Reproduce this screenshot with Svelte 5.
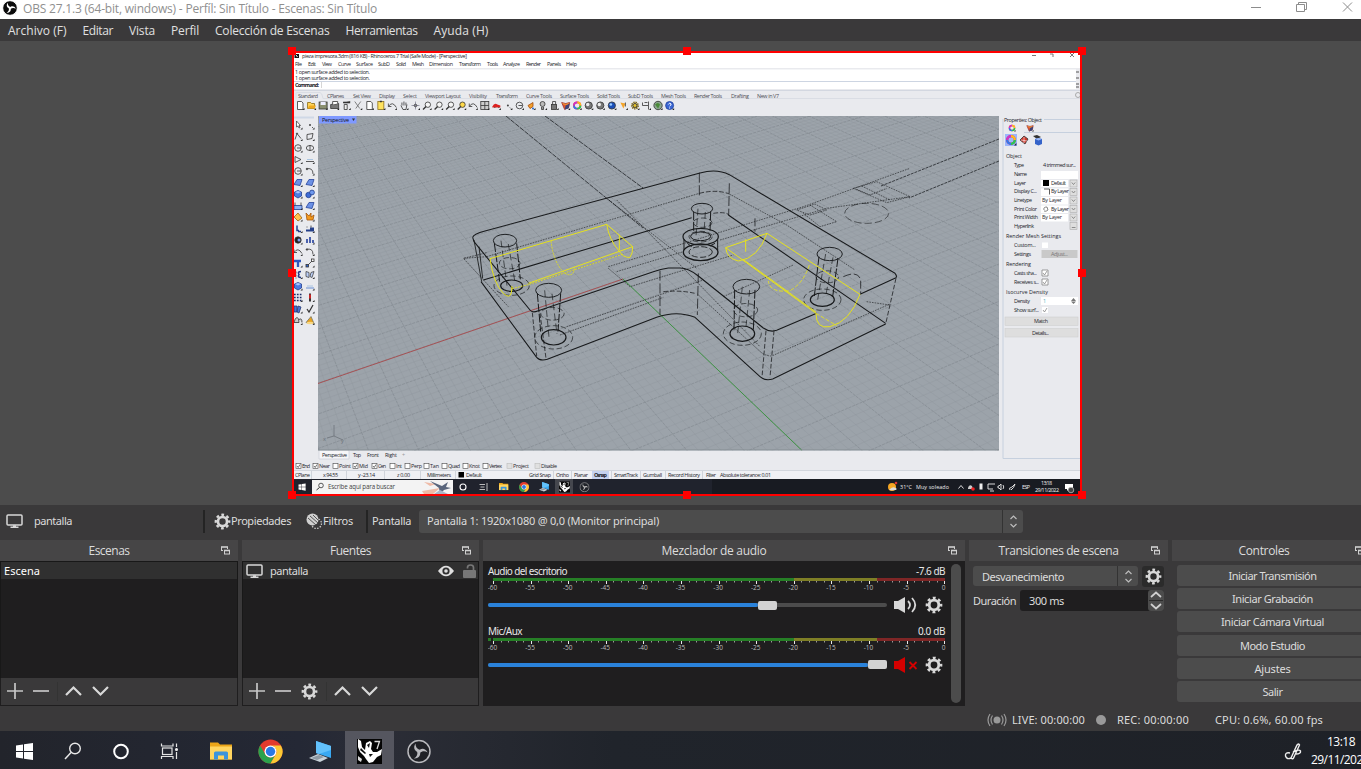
<script>
  // Adjusts letter spacing so that a label takes its design width.
  function fit(node, width) {
    if (!width) return;
    const natural = node.getBoundingClientRect().width;
    const n = node.textContent.length;
    const ls = (width - natural) / n;
    node.style.letterSpacing = ls.toFixed(3) + 'px';
  }

  const menus = [['Archivo (F)', 58.5], ['Editar', 30.5], ['Vista', 26], ['Perfil', 28], ['Colección de Escenas', 114.5], ['Herramientas', 72], ['Ayuda (H)', 55]];
  const controls = [['Iniciar Transmisión', 88], ['Iniciar Grabación', 81], ['Iniciar Cámara Virtual', 103], ['Modo Estudio', 65], ['Ajustes', 36], ['Salir', 20]];
  const channels = [
    { name: 'Audio del escritorio', w: 79, db: '-7.6 dB', dw: 29, pos: 270, muted: false },
    { name: 'Mic/Aux', w: 34, db: '0.0 dB', dw: 27, pos: 380, muted: true }
  ];
  const ticks = Array.from({ length: 61 }, (_, i) => ({ x: 5.5 + i * 7.52, big: i % 5 === 0, v: i - 60 }));

  // Construction plane, projected to two vanishing points.
  const O = [623, 279], V1 = [3286, -629], V2 = [124, -198];
  const A = 0.0024, B = 0.0082;
  function proj(a, b) {
    const d = 1 + a + b;
    return ((O[0] + a * V1[0] + b * V2[0]) / d).toFixed(1) + ' ' + ((O[1] + a * V1[1] + b * V2[1]) / d).toFixed(1);
  }
  let fine = '', major = '';
  for (let n = -60; n <= 100; n++) {
    const s = 'M' + proj(n * A, -0.42) + 'L' + proj(n * A, 0.9);
    if (n % 5 === 0) major += s; else fine += s;
  }
  for (let m = -46; m <= 95; m++) {
    const s = 'M' + proj(-0.16, m * B) + 'L' + proj(0.3, m * B);
    if (m % 5 === 0) major += s; else fine += s;
  }

  // [text, x, baseline, width]
  const rhinoMenu = [['File', 295, 7], ['Edit', 308, 8], ['View', 322, 10], ['Curve', 338, 13], ['Surface', 356, 17], ['SubD', 378, 12], ['Solid', 396, 10], ['Mesh', 412, 12], ['Dimension', 429, 24], ['Transform', 459, 22], ['Tools', 487, 11], ['Analyze', 503, 17], ['Render', 526, 15], ['Panels', 547, 14], ['Help', 566, 11]];
  const tabs = [['Standard', 298, 20], ['CPlanes', 327, 17], ['Set View', 353, 18], ['Display', 379, 16], ['Select', 403, 14], ['Viewport Layout', 425, 36], ['Visibility', 469, 18], ['Transform', 496, 22], ['Curve Tools', 526, 26], ['Surface Tools', 560, 29], ['Solid Tools', 597, 23], ['SubD Tools', 628, 25], ['Mesh Tools', 661, 25], ['Render Tools', 694, 28], ['Drafting', 731, 18], ['New in V7', 757, 22]];
  const props = [['Type', 1014, 167, 10], ['Name', 1014, 176, 13], ['Layer', 1014, 185, 12], ['Display C...', 1014, 193, 23], ['Linetype', 1014, 202, 18], ['Print Color', 1014, 210.5, 23], ['Print Width', 1014, 219, 24], ['Hyperlink', 1014, 228, 20], ['Custom...', 1014, 247, 22], ['Settings', 1014, 256, 17], ['Casts sha...', 1014, 275, 23], ['Receives s...', 1014, 284, 25], ['Density', 1014, 303, 16], ['Show surf...', 1014, 312, 25]];
  const heads = [['Properties: Object', 1004, 121.5, 38], ['Object', 1006, 158, 16], ['Render Mesh Settings', 1006, 238, 55], ['Rendering', 1006, 266, 25], ['Isocurve Density', 1006, 294, 42]];
  const snaps = [['End', 296, 8, 1], ['Near', 313, 11, 1], ['Point', 333, 12, 0], ['Mid', 353, 9, 1], ['Cen', 372, 8, 1], ['Int', 390, 6, 0], ['Perp', 405, 11, 0], ['Tan', 424, 9, 0], ['Quad', 442, 12, 0], ['Knot', 463, 11, 0], ['Vertex', 483, 13, 0], ['Project', 507, 16, 2], ['Disable', 535, 16, 2]];
  const status = [['CPlane', 295, 15], ['x 94.55', 323, 15], ['y -23.14', 358, 17], ['z 0.00', 397, 13], ['Millimeters', 427, 24], ['Default', 466, 16], ['Grid Snap', 529, 22], ['Ortho', 556, 13], ['Planar', 574, 14], ['SmartTrack', 614, 24], ['Gumball', 643, 19], ['Record History', 668, 32], ['Filter', 706, 10], ['Absolute tolerance: 0.01', 720, 51]];

  // Toolbar glyph kinds in reading order.
  const tools = ['new', 'open', 'save', 'print', 'prop', 'cut', 'new', 'paste', 'undo', 'hand', 'move', 'zoom', 'zoom', 'zoomx', 'zoomy', 'rot', 'grid', 'car', 'dot', 'circ', 'layer', 'bulb', 'lock', 'shade', 'wheel', 'ball', 'ball', 'blue', 'spot', 'gear', 'dim', 'earth', 'help'];
  const left = ['ptr', 'dot', 'poly', 'rectp', 'circ', 'ell', 'tri', 'line', 'circ2', 'curve', 'surf', 'surf2', 'box', 'balls', 'cyl', 'surf', 'puz', 'expl', 'trim', 'join', 'bool', 'pts', 'arc', 'arc2', 'T', 'pts2', 'arr', 'sheet', 'box', 'split', 'dots', 'lever', 'books', 'check', 'bell', 'cone'];

  const wells = [
    { top: [165, 272, 35, 19], tl: [133, 280, 149, 395], tr: [200, 280, 211, 388], base: [185, 407, 33, 17] },
    { top: [296, 421, 39, 21], tl: [262, 430, 272, 545], tr: [332, 430, 324, 545], base: [311, 562, 37, 23] },
    { top: [756, 176, 32, 16], tl: [731, 185, 731, 245], tr: [782, 185, 780, 245], base: [752, 260, 53, 25] },
    { top: [889, 410, 40, 22], tl: [854, 420, 852, 540], tr: [915, 420, 910, 540], base: [877, 551, 37, 23] },
    { top: [1139, 312, 38, 20], tl: [1107, 320, 1093, 438], tr: [1164, 325, 1148, 440], base: [1117, 449, 36, 20] }
  ];
</script>

{#snippet gear(size, color)}
  <svg width={size} height={size} viewBox="0 0 18 18" fill="none" stroke={color}>
    <circle cx="9" cy="9" r="4.8" stroke-width="2.8" />
    <circle cx="9" cy="9" r="7.1" stroke-width="2.5" stroke-dasharray="2.9 2.676" stroke-dashoffset="1.45" />
  </svg>
{/snippet}

{#snippet monitor()}
  <svg width="17" height="14" viewBox="0 0 17 14" fill="none" stroke="#d8d8d8">
    <rect x="1" y="1" width="15" height="10" rx="1" stroke-width="1.5" /><path d="M4.5 13.2h8M7 12h3" stroke-width="1.4" />
  </svg>
{/snippet}

{#snippet chev(up)}
  <svg width="17" height="12" viewBox="0 0 17 12" fill="none" stroke="#d8d8d8" stroke-width="2.2"><path d={up ? 'M1 10L8.500 2.500L16 10' : 'M1 2L8.500 9.500L16 2'} /></svg>
{/snippet}

{#snippet sign(plus)}
  <svg width="16" height="16" viewBox="0 0 16 16" stroke="#c6c6c6" stroke-width="1.7"><path d={plus ? 'M0 8H16M8 0V16' : 'M0 8H16'} /></svg>
{/snippet}

{#snippet popout()}
  <svg class="pop" width="9" height="9" viewBox="0 0 9 9" fill="none" stroke="#d0d0d0">
    <path d="M.5 5V1M6.500 1V3M.5 4.500H2" /><path d="M0 1H7" stroke-width="1.600" /><rect x="3.500" y="4.500" width="5" height="3.500" /><path d="M3 4.500H9" stroke-width="1.600" />
  </svg>
{/snippet}

{#snippet dockTitle(label, w)}
  <header><span use:fit={w}>{label}</span>{@render popout()}</header>
{/snippet}

{#snippet obs(size, ring, bg)}
  <svg width={size} height={size} viewBox="0 0 24 24">
    <circle cx="12" cy="12" r="11" fill={bg} stroke={ring} stroke-width="1.5" />
    <g fill={ring}>{#each [0, 120, 240] as r}<path transform="rotate({r} 12 12)" d="M12.500 13C8 12.500 5.500 8.500 8.500 4C8.500 7.500 10 9.500 13 10.500Z" />{/each}</g>
  </svg>
{/snippet}

{#snippet chrome(cx, cy, r)}
  <g transform="translate({cx} {cy}) scale({r / 12})">
    <circle r="12" fill="#e33b2e" />
    <path d="M-10.400 -6A12 12 0 0 0 0 12L5.200 3A6 6 0 0 1 -5.200 3Z" fill="#2ba24c" />
    <path d="M10.400 -6A12 12 0 0 1 0 12L5.200 3A6 6 0 0 0 0 -6Z" fill="#fcc934" />
    <circle r="6" fill="#fff" /><circle r="4.700" fill="#2b78e4" />
  </g>
{/snippet}

{#snippet folder(x, y, s)}
  <g transform="translate({x} {y}) scale({s})">
    <path d="M0 1H8L10 3H22V18H0Z" fill="#eba518" /><path d="M0 5H22V18H0Z" fill="#ffd560" />
    <path d="M4 18V11.500Q4 10 5.500 10H16.500Q18 10 18 11.500V18H14V14H8V18Z" fill="#3c94dc" />
  </g>
{/snippet}

{#snippet laptop(x, y, s)}
  <g transform="translate({x} {y}) scale({s})">
    <path d="M7 0L22 5V17L7 12Z" fill="#39a9f3" /><path d="M7 0L22 5V9L10 13L7 12Z" fill="#62c1fb" />
    <path d="M0 17L9 13L19 17L11 21Z" fill="#c9d2d9" /><path d="M2 17L10 14L15 16L8 19Z" fill="#8e9aa4" />
  </g>
{/snippet}

{#snippet rhino(x, y, s)}
  <g transform="translate({x} {y}) scale({s})">
    <rect width="25" height="25" fill="#050505" />
    <path d="M1 0L4 2L5 8L8 11L9 4L13 2L15 4L14 10L16 13L20 13L25 10L24 16L20 18L16 23L12 24L9 20L7 17L3 13L1 8Z" fill="#fff" />
    <path d="M4 9L9 14L8 15L3 11ZM12 15L16 15L13 18ZM10 6L13 4L12 9Z" fill="#111" /><path d="M1 17L5 20L4 23L1 21Z" fill="#ddd" />
    <path d="M17.500 2.500H22.500L20 10" fill="none" stroke="#ddd" stroke-width="1.300" />
  </g>
{/snippet}

{#snippet windows(x, y, s)}
  <path transform="translate({x} {y}) scale({s})" d="M0 2.500L7 1.500V8H0ZM8 1.300L17 0V8H8ZM0 9H7V15.500L0 14.500ZM8 9H17V17L8 15.700Z" fill="#fff" />
{/snippet}

{#snippet icon(k, x, y)}
  <g transform="translate({x} {y})" fill="none" stroke="#333" stroke-width=".8">
    {#if k === 'new'}<path d="M-2.500-4H1.500L3-2.500V4H-2.500Z" fill="#fff" />
    {:else if k === 'open'}<path d="M-4-3H-1L0-2H3V3H-4Z" fill="#ffd45a" stroke="#8a6a10" /><path d="M-4 3L-2 0H4.500L3 3Z" fill="#f0a91e" stroke="none" />
    {:else if k === 'save'}<rect x="-4" y="-3.500" width="8" height="7" fill="#8a8f70" /><rect x="-2.500" y="-3.500" width="5" height="3" fill="#eef" stroke="none" />
    {:else if k === 'print'}<path d="M-4-1L4-2V3H-4Z" fill="#777" /><path d="M-2-1V-4H3V-2" fill="#fff" />
    {:else if k === 'prop'}<path d="M-3-3H3M0-3L4-4M1-1V4H-2V-1Z" fill="#eee" /><path d="M-3-3H4" stroke-width="1.600" />
    {:else if k === 'cut'}<path d="M-3-4L2 3M3-4L-2 3" stroke="#666" />
    {:else if k === 'paste'}<rect x="-3" y="-4" width="6" height="8" fill="#ffe25e" stroke="#8b701c" /><path d="M-1-4H1" stroke-width="1.500" />
    {:else if k === 'undo' || k === 'rot' || k === 'arc'}<path d="M-4 1Q0-5 4 2M-4 1V-2M-4 1H-1" />
    {:else if k === 'hand'}<path d="M-2 0V-3M0 0V-4M2 0V-3M-3 0L-1 4H2L3-1" />
    {:else if k === 'move'}<path d="M-4 0H4M0-4V4" stroke="#889" /><circle r="1.300" />
    {:else if k === 'zoom' || k === 'zoomx'}<circle cx=".8" cy="-.8" r="2.700" fill="#f6f6f6" /><path d="M-1 1L-4 4" stroke-width="1.300" />
    {:else if k === 'zoomy'}<circle cx=".8" cy="-.8" r="2.700" fill="#ffd94a" /><path d="M-1 1L-4 4" stroke-width="1.300" />
    {:else if k === 'grid'}<rect x="-4" y="-4" width="8" height="8" fill="#ccc" /><path d="M0-4V4M-4 0H4" />
    {:else if k === 'car'}<path d="M-4 1Q-2-3 1-1L4 0V2H-4Z" fill="#dc2222" stroke="none" /><path d="M-2 2H-1M2 2H3" />
    {:else if k === 'dot'}<circle r="1" fill="#444" stroke="none" /><path d="M2 2L3 3" />
    {:else if k === 'circ' || k === 'circ2'}<circle r="3.300" /><path d="M-1 0H3" />
    {:else if k === 'ell'}<ellipse rx="3.700" ry="2.500" /><path d="M0-3V3" />
    {:else if k === 'layer'}<path d="M-3 0L2-3V1L-1 3Z" fill="#f4a02c" stroke="#a04a10" /><circle cx="2" cy="3" r="1" fill="#26c" stroke="none" />
    {:else if k === 'bulb'}<circle cy="-1.500" r="2.500" fill="#bbb" /><path d="M-1 1.500V4H1V1.500" fill="#999" />
    {:else if k === 'lock'}<rect x="-2.500" y="-1" width="5" height="5" fill="#777" /><path d="M-1.500-1V-4H1.500V-1" />
    {:else if k === 'shade'}<path d="M-4-3L0-2L4-3L3 2L-1 4Z" fill="#e4572e" stroke="#933" /><path d="M0 0L4-2L3 3L-1 4Z" fill="#3c4378" stroke="none" /><path d="M-3-2L0-1L3-2" stroke="#f7b53a" />
    {:else if k === 'wheel'}<circle r="3.200" stroke="#e33" stroke-width="1.800" /><path d="M-3.200 0A3.200 3.200 0 0 0 0 3.200" stroke="#37e" stroke-width="1.800" /><path d="M0 3.200A3.200 3.200 0 0 0 3.200 0" stroke="#2c5" stroke-width="1.800" /><path d="M3.200 0A3.200 3.200 0 0 0 0-3.200" stroke="#fb2" stroke-width="1.800" /><path d="M-3.200 0A3.200 3.200 0 0 1 0-3.200" stroke="#c3c" stroke-width="1.800" />
    {:else if k === 'ball'}<circle r="3.600" fill="#777" /><circle cx="-1" cy="-1" r="1.700" fill="#eee" stroke="none" />
    {:else if k === 'blue'}<circle r="3.600" fill="#1b4fb8" /><circle cx="-1" cy="-1" r="1.300" fill="#9cf" stroke="none" />
    {:else if k === 'spot'}<path d="M-3-3L2-2L0 3Z" fill="#f5a52a" stroke="none" /><path d="M2-3V1" />
    {:else if k === 'gear'}<circle r="2.800" stroke="#77600c" stroke-width="2.400" stroke-dasharray="1.200 .7" /><circle r="2" fill="#e5c22b" />
    {:else if k === 'dim'}<path d="M-4-3V0H2V4M2-4V0M-2-3H1" />
    {:else if k === 'earth'}<circle r="4.200" fill="#8aa58e" /><path d="M-3-1Q0-4 2-1L0 3Z" fill="#4a8a3a" stroke="none" />
    {:else if k === 'help'}<circle r="4" fill="#3a66d4" stroke="#1f4099" /><path d="M-1.300-1Q0-3.500 1.500-1.500Q1.500 0 0 .7M0 2V3" stroke="#fff" stroke-width="1" />
    {:else if k === 'ptr'}<path d="M-1.500-4V2L0 1L1 3L2 2.500L1 .5H2.500Z" fill="#fff" stroke-width=".7" />
    {:else if k === 'poly'}<path d="M-3 3L-1-3L3 2" /><circle cx="-1" cy="-3" r=".6" />
    {:else if k === 'rectp'}<path d="M-3-2L3-3L2 2L-3 3Z" />
    {:else if k === 'tri'}<path d="M-3-3V3L3 0Z" />
    {:else if k === 'line' || k === 'split'}<path d="M-4 2H4" stroke={k === 'split' ? '#47c' : '#333'} /><path d="M-3 0H3" stroke="#9bd" />
    {:else if k === 'curve' || k === 'arc2'}<path d="M-4-2Q3-4 3 3" /><circle cx="-3" cy="-2" r=".8" />
    {:else if k === 'surf' || k === 'surf2'}<path d="M-4 2L-1-3L4-3L2 3Z" fill="#6c91e6" stroke="#26439a" />
    {:else if k === 'box'}<path d="M-3.500-2L0-3.500L3.500-2V2L0 4L-3.500 2Z" fill="#4e7be0" stroke="#23408f" /><path d="M-3-2L0-.5L3-2L0-3Z" fill="#a8c4ff" stroke="none" />
    {:else if k === 'balls'}<circle cx="-1.500" cy="1" r="2.700" fill="#3f6cd6" stroke="#23408f" /><circle cx="2" cy="-1.500" r="2.400" fill="#6f99ee" stroke="#23408f" />
    {:else if k === 'cyl'}<path d="M-4 0H4V4H-4Z" fill="#8fb1f0" stroke="#23408f" /><path d="M-3-3V0M3-3V0" />
    {:else if k === 'puz'}<path d="M-4 0L0-4L4 1L0 4Z" fill="#ffc44a" stroke="#9a6010" />
    {:else if k === 'expl'}<path d="M-4-4L-1-1L1-4L1 0L4-2L3 3H-3Z" fill="#f2991d" stroke="#a3560d" />
    {:else if k === 'trim'}<path d="M0 3H3M-1-3V2H1" stroke="#25408a" stroke-width="1.500" />
    {:else if k === 'join'}<path d="M-4 2H4M0 0H4" stroke="#25408a" stroke-width="1.800" /><path d="M-3-1V-2M1-3V-1" />
    {:else if k === 'bool'}<circle r="3.200" fill="#222" /><circle r="1.500" cx="1" fill="#7fa0ee" stroke="none" />
    {:else if k === 'pts'}<path d="M-3 3V-1M0 3V-3M3 3V0" stroke="#223f9c" stroke-width="1.600" />
    {:else if k === 'T'}<path d="M-4-2H3M0-2V4" stroke="#2e57bd" stroke-width="2.300" />
    {:else if k === 'pts2'}<path d="M-3 3L3-3" /><rect x="-4" y="1.500" width="2.500" height="2.500" fill="#36c" /><rect x="1.500" y="-4" width="2.500" height="2.500" fill="#fff" />
    {:else if k === 'arr'}<path d="M3-3Q-1-3 1 0Q-1 3 3 3" stroke="#213a86" stroke-width="1.500" /><path d="M-2-3V4" stroke-dasharray="2 1" />
    {:else if k === 'sheet'}<path d="M-4-3L-1-2V3L-4 2ZM1-2L4-3L2 3L0 2Z" fill="#bcd0fa" stroke="#444" />
    {:else if k === 'dots'}<path d="M-4-3H4M-4 0H4M-4 3H4" stroke="#1d2d66" stroke-width="1.700" stroke-dasharray="1.700 1.200" />
    {:else if k === 'lever'}<path d="M0-4V4" stroke="#222" stroke-width="1.800" /><path d="M0-3V1" stroke="#d22" stroke-width="1.800" />
    {:else if k === 'books'}<path d="M-4-3H-1V3H-4ZM0-3L3-2L1 4L-1 3Z" fill="#4b72d0" stroke="#263b77" />
    {:else if k === 'check'}<path d="M-3 0L-1 3L3-4" stroke-width="1.200" />
    {:else if k === 'bell'}<path d="M-4 2Q-3-3-1-3Q1-3 1 2ZM1-1Q4-3 4 2" fill="#ccc" />
    {:else if k === 'cone'}<path d="M-4 2L1-4L4 3Z" fill="#e8a321" stroke="#776" /><ellipse cy="2.500" rx="3.500" ry="1.200" fill="#f8d783" stroke="none" />
    {/if}
    <path d="M4.500 2.500V4.500H2.500Z" fill="#222" stroke="none" />
  </g>
{/snippet}

<div class="app">
  <div class="titlebar">
    {@render obs(16, '#fff', '#0b0b0b')}
    <span class="title" use:fit={354}>OBS 27.1.3 (64-bit, windows) - Perfíl: Sin Título - Escenas: Sin Título</span>
    <svg class="winbtns" width="110" height="14" viewBox="0 0 110 14" fill="none" stroke="#8c8c8c">
      <path d="M3 7.500H13" /><path d="M48.500 4.500H56.500V11.500H48.500ZM50.500 4.500V2.500H58.500V9.500H56.500" /><path d="M95 2.500L104 11.500M104 2.500L95 11.500" />
    </svg>
  </div>
  <nav>{#each menus as [m, w]}<span use:fit={w}>{m}</span>{/each}</nav>

  <svg class="preview" width="1361" height="464" viewBox="0 41 1361 464">
    <defs>
      <clipPath id="vp"><rect x="318" y="116" width="681" height="334.500" /></clipPath>
      <clipPath id="cap"><rect x="294" y="53" width="786" height="441" /></clipPath>
    </defs>
    <g clip-path="url(#cap)" class="cap">
      <rect x="292" y="51" width="790" height="445" fill="#e9eaee" />
      <rect x="292" y="51" width="790" height="17" fill="#fff" />
      <rect x="294" y="69.500" width="782" height="19.500" fill="#fff" />
      <path d="M294 81.500H1076" stroke="#cdd5e2" /><path d="M294 90.500H1080" stroke="#d3d7e0" />
      <path d="M294.500 54H299V58H294.500Z" fill="#111" /><path d="M296 55L297.500 57" stroke="#fff" />
      <text x="302" y="57.500" textLength="165">pieza impresora.3dm (816 KB) - Rhinoceros 7 Trial (Safe Mode) - [Perspective]</text>
      <path d="M1032 55.500H1036M1050 54H1053V57M1070 53L1074 57M1074 53L1070 57" stroke="#777" fill="none" />
      {#each rhinoMenu as [t, x, w]}<text {x} y="66" textLength={w}>{t}</text>{/each}
      <text x="295" y="74" textLength="75">1 open surface added to selection.</text>
      <text x="295" y="80.200" textLength="75">1 open surface added to selection.</text>
      <text x="295" y="87" textLength="24" class="bold">Command:</text><path d="M321.500 82V88" stroke="#bbb" stroke-width=".6" />
      <path d="M1076 72H1079M1076 78H1079M1076 84H1079M1076 87H1079" stroke="#555" />
      <circle cx="1078" cy="95" r="2.500" fill="none" stroke="#999" stroke-width=".8" />
      <path d="M296 98.500V93.500Q296 92.500 297 92.500H320Q322 92.500 323 98.500H1080" fill="none" stroke="#dadde4" />
      {#each tabs as [t, x, w]}<text {x} y="97.800" textLength={w} fill="#4c4c55">{t}</text>{/each}
      {#each tools as k, i}{@render icon(k, 300 + i * 11.55, 105.500)}{/each}
      <path d="M294 117.500H314" stroke="#cfd8e6" stroke-width="2" />
      {#each left as k, i}{@render icon(k, 298 + (i % 2) * 12, 125 + Math.floor(i / 2) * 11.500)}{/each}

      <g clip-path="url(#vp)">
        <rect x="318" y="116" width="681" height="335" fill="#9ca3aa" />
        <path d={fine} stroke="#8d949b" stroke-width=".55" fill="none" opacity=".55" />
        <path d={major} stroke="#777e85" stroke-width=".75" fill="none" opacity=".6" stroke-dasharray="3 1" />
        <path d="M318 383.500L623 279" stroke="#a8494c" stroke-width=".9" /><path d="M623 279L802 450.500" stroke="#3f9544" />
        <path d="M318 450H999" stroke="#858c93" />
        <g fill="none" stroke="#777d84"><path d="M334 425V436L343 440M334 436L327 438" /></g>
        <text x="323" y="441" fill="#6b7178">x</text><text x="341" y="443" fill="#6b7178">y</text>
        <path d="M506 116L643 228M545 116L643 188" stroke="#2e3135" stroke-width=".9" stroke-dasharray="5 1" fill="none" />
        <path d="M999 139L881 186M999 161L909 198" stroke="#2e3135" stroke-width=".9" stroke-dasharray="3 1" fill="none" />
        <g transform="translate(450 150) scale(.33333)" fill="none" stroke="#17191b" stroke-linejoin="round">
          <g stroke-width="3.200">
            <path d="M68 262Q70 252 105 243L750 69Q800 55 838 74L1335 370Q1342 378 1338 383L1230 433M1100 490L980 541Q960 548 940 534L745 378Q715 354 690 354H655Q632 357 610 365L265 482Q247 490 240 480L72 275L68 262" />
            <path d="M93 395L260 622Q270 634 292 628L620 502Q680 480 735 502L930 680Q946 694 968 687L1307 522" />
            <path d="M100 390L725 203M835 195L1307 520" />
            <path d="M72 270L95 395M87 290L98 385" stroke-width="2.600" />
          </g>
          <g stroke-width="2.300" stroke-dasharray="30 8">
            <path d="M748 68V142M838 100L836 195M630 362V495M745 370L742 495" />
            <path d="M1338 385L1307 522M948 542L936 682M972 542L960 682M247 488L260 618M270 490L288 625M790 190Q828 184 838 196M640 425Q690 420 735 430M748 130Q800 117 838 132" stroke-dasharray="14 6" />
          </g>
          <g stroke-width="1.800" stroke-dasharray="5 3">
            <path d="M110 320L748 130M838 132L1010 225L1215 360M110 320L40 325L175 470M110 308L40 325M350 530L620 438L760 390M330 555L640 442M475 350L1060 170L1380 55M475 355L540 410L850 315M500 365L700 305M810 270L1130 175L1380 140M470 145L740 355M500 150L930 590M742 432L930 604Q945 618 965 618L1320 462" />
            <path d="M1210 115L1280 95L1380 140L1310 158ZM1235 108L1320 150M1040 180L1095 162L1130 180L1080 195ZM1080 165L1160 215L1110 230L1060 190M1220 118L1260 135L1310 115M820 440L1030 345M1250 455L1320 465" />
            <ellipse cx="1250" cy="190" rx="66" ry="30" stroke-dasharray="22 9" />
            <path d="M1180 380Q1225 360 1232 390V430M915 205V245" stroke-dasharray="24 8" stroke-width="2.300" />
          </g>
          <path d="M300 0L575 225M420 0L620 150" stroke-width="0" />
          {#each wells as w}
            <ellipse cx={w.top[0]} cy={w.top[1]} rx={w.top[2]} ry={w.top[3]} stroke-width="2.800" />
            <path d="M{w.tl[0]} {w.tl[1]}L{w.tl[2]} {w.tl[3]}M{w.tr[0]} {w.tr[1]}L{w.tr[2]} {w.tr[3]}" stroke-width="3" stroke-dasharray="26 5" />
            <path d="M{w.top[0] - 12} {w.top[1]}L{w.base[0] - 14} {w.base[1]}M{w.top[0] + 10} {w.top[1] + 10}L{w.base[0] + 10} {w.base[1] - 10}" stroke-width="2" stroke-dasharray="20 10" />
            <ellipse cx={w.base[0]} cy={w.base[1]} rx={w.base[2]} ry={w.base[3]} stroke-width="3.600" />
            <ellipse cx={w.base[0]} cy={w.base[1]} rx={w.base[2] + (w.base[2] > 50 ? -18 : 20)} ry={w.base[3] + (w.base[2] > 50 ? -9 : 12)} stroke-width="2" stroke-dasharray="16 8" />
            <ellipse cx={(w.top[0] + w.base[0]) / 2 + 4} cy={(w.top[1] + w.base[1]) / 2} rx={w.top[2] - 4} ry={w.top[3] - 2} stroke-width="2" stroke-dasharray="16 8" />
          {/each}
          <ellipse cx="752" cy="307" rx="52" ry="25" stroke-width="4" /><ellipse cx="752" cy="306" rx="35" ry="16" stroke-width="2.500" stroke-dasharray="18 7" />
          <ellipse cx="752" cy="259" rx="30" ry="13" stroke-width="3" />
          <path d="M702 268V300M803 268V300M712 280L725 290M780 288L795 280" stroke-width="3" />
          <g stroke="#e6e21c" stroke-width="3">
            <path d="M120 326L470 223L548 290L235 400M120 326Q130 400 160 430Q180 448 184 428L186 408M470 223Q478 270 505 300Q520 325 540 322Q549 310 548 290M508 255V300" />
            <path d="M303 272Q310 340 345 370Q372 385 374 350M186 416L235 404L520 312" stroke-dasharray="6 3" stroke-width="2.600" />
            <path d="M827 293L951 250L1230 433Q1200 515 1140 530Q1098 538 1098 490L827 293Q830 325 865 333Q925 325 951 250M887 268V305M882 330L1098 486" />
            <path d="M1078 345Q1060 400 1020 422Q960 430 955 393M1098 490L1160 527" stroke-dasharray="12 5" stroke-width="2.600" />
          </g>
        </g>
        <rect x="319" y="116" width="37.500" height="7.500" fill="#7f99ff" />
        <text x="322" y="121.500" textLength="27" fill="#111">Perspective</text><path d="M352 118.500H355L353.500 121Z" fill="#333" />
      </g>

      <path d="M1003 119V458.500H1080" fill="none" stroke="#c6d0de" /><path d="M1044 119.500H1080M1024 132.500H1080" stroke="#c6d0de" />
      {#each heads as [t, x, y, w]}<text {x} {y} textLength={w}>{t}</text>{/each}
      <rect x="1005" y="134" width="12" height="12" fill="#9db5fb" />
      <g transform="translate(1012 128) scale(.8)">{@render icon('wheel', 0, 0)}</g><g transform="translate(1030 128) scale(.8)">{@render icon('shade', 0, 0)}</g>
      <g transform="translate(1011 140) scale(1.200)">{@render icon('wheel', 0, 0)}</g>
      <g transform="translate(1024 140)"><path d="M-4 0L0-4L4-1L1 4Z" fill="#cf3327" stroke="#333" stroke-width=".8" /><path d="M-3 0L3 1M0-3L0 3" stroke="#fff" stroke-width=".6" /></g>
      <path d="M1033 136L1037 135L1041 137L1037 139Z" fill="#333" /><path d="M1035 139L1038.500 138L1042 139V144L1038.500 145.500L1035 144Z" fill="#3563c9" /><path d="M1035 139L1038.500 138L1042 139L1038.500 140.500Z" fill="#9ab8f5" />
      <g fill="#fff"><path d="M1041 171H1078V179H1041ZM1041 180H1068V187H1041ZM1041 188.500H1068V196H1041ZM1041 197H1068V204.500H1041ZM1041 205.500H1068V213H1041ZM1041 214H1068V221.500H1041ZM1042 242.500H1048V248H1042ZM1041 297H1078V305H1041ZM1042 270H1048V276H1042ZM1042 279H1048V285H1042ZM1042 307H1048V313H1042Z" /></g>
      {#each [180, 188.500, 197, 205.500, 214, 222.500] as y, i}
        <rect x="1070" {y} width="7" height="7" fill="#dedede" stroke="#aaa" stroke-width=".6" />
        <path d={i < 5 ? `M1071.800 ${y + 2.500}L1073.500 ${y + 4.500}L1075.200 ${y + 2.500}` : `M1071.800 ${y + 5}H1075.500`} stroke="#777" fill="none" stroke-width=".8" />
      {/each}
      <g fill="none" stroke="#777" stroke-width=".7"><path d="M1042 270H1048V276H1042ZM1042 279H1048V285H1042Z" /><path d="M1043 273L1044.500 275L1047 271M1043 282L1044.500 284L1047 280M1043 310L1044.500 312L1047 308" /></g>
      {#each props as [t, x, y, w]}<text {x} {y} textLength={w}>{t}</text>{/each}
      <text x="1043" y="167" textLength="33">4 trimmed sur...</text>
      <rect x="1043" y="180" width="6" height="6" fill="#000" /><path d="M1044 189H1049.500V194.500" fill="none" stroke="#333" stroke-width=".8" /><path d="M1044 210Q1043 207 1047 207L1048 210Q1046 212 1044 211" fill="none" stroke="#555" stroke-width=".7" />
      <text x="1051" y="185" textLength="15">Default</text><text x="1051" y="193" textLength="18">By Layer</text><text x="1042" y="202" textLength="20">By Layer</text>
      <text x="1051" y="210.500" textLength="18">By Layer</text><text x="1042" y="219" textLength="20">By Layer</text>
      <text x="1043" y="303" fill="#4ab0c0">1</text><path d="M1071 301H1076L1073.500 298ZM1071 301.500H1076L1073.500 304Z" fill="#777" />
      <rect x="1041.500" y="250" width="36" height="8" fill="#c9c9c9" /><text x="1051" y="256" textLength="17" fill="#777">Adjust...</text>
      <rect x="1005" y="317" width="73" height="8.500" fill="#dedede" stroke="#ccc" stroke-width=".5" /><rect x="1005" y="328.500" width="73" height="8.500" fill="#dedede" stroke="#ccc" stroke-width=".5" />
      <text x="1034" y="323" textLength="14">Match</text><text x="1032" y="334.500" textLength="17">Details...</text>

      <path d="M319 451V459H349V451" fill="#f6f6f8" stroke="#cfd3da" stroke-width=".8" />
      <text x="322" y="457.300" textLength="25">Perspective</text><text x="353" y="457.300" textLength="8">Top</text><text x="367" y="457.300" textLength="12">Front</text><text x="385" y="457.300" textLength="12">Right</text><text x="402" y="457.300" fill="#999">+</text>
      {#each snaps as [t, x, w, c]}
        <rect {x} y="463.500" width="5" height="5" fill={c === 2 ? '#e0e0e0' : '#fff'} stroke={c === 2 ? '#bbb' : '#444'} stroke-width=".6" />
        {#if c === 1}<path d="M{x + 1} 466L{x + 2.200} 467.500L{x + 4} 464.500" fill="none" stroke="#333" stroke-width=".7" />{/if}
        <text x={x + 6} y="468.300" textLength={w}>{t}</text>
      {/each}
      <path d="M294 470.500H1080" stroke="#d2d6dd" /><rect x="294" y="471" width="786" height="8" fill="#eff0f4" />
      <rect x="592" y="471" width="17" height="8" fill="#c5d2f0" /><text x="594" y="477" textLength="13" class="bold">Osnap</text>
      {#each status as [t, x, w]}<text {x} y="477" textLength={w}>{t}</text>{/each}
      <rect x="458.500" y="472" width="5.500" height="5.500" fill="#000" />
      <path d="M311.500 471V479M346.500 471V479M384.500 471V479M420.500 471V479M455.500 471V479M553.500 471V479M571.500 471V479M611.500 471V479M640.500 471V479M665.500 471V479M702.500 471V479" stroke="#d0d4db" />

      <rect x="292" y="479" width="790" height="17" fill="#181b22" />
      <rect x="292" y="479" width="420" height="17" fill="#20232d" />
      {@render windows(298.500, 483.500, .42)}
      <rect x="312" y="480" width="141" height="14" fill="#f3f3f3" />
      <circle cx="321" cy="485.500" r="2.300" fill="none" stroke="#333" stroke-width=".8" /><path d="M319.500 487.500L316.500 490" stroke="#333" />
      <text x="328" y="489.200" textLength="67" class="big" fill="#444">Escribe aquí para buscar</text>
      <path d="M424 482L436 484L430 486ZM422 491L440 488L433 494H424Z" fill="#eebaa6" /><path d="M430 481L442 486L448 482L446 487L451 488L444 490L440 494L439 488Z" fill="#59657c" /><path d="M440 490L448 494H434Z" fill="#aab6c6" />
      <circle cx="463" cy="487" r="3" fill="none" stroke="#fff" stroke-width="1.100" />
      <path d="M479.500 484.500H485M479.500 489.500H485M480.500 487H484.500M487 483V491" stroke="#ccc" stroke-width=".9" />
      {@render folder(499, 482.500, .42)}{@render chrome(524, 487, 5)}{@render laptop(539, 482, .45)}
      <rect x="555" y="479" width="18" height="16" fill="#45474e" />{@render rhino(559, 481.500, .44)}
      <g transform="translate(579.500 482.200)">{@render obs(10, '#bbb', '#20232a')}</g>
      <circle cx="892" cy="487" r="4" fill="#f5a623" /><path d="M889 490Q893 485 897 489Q896 491 889 490Z" fill="#ddd" /><circle cx="896" cy="483" r="1.300" fill="#d33" />
      <text x="900" y="489.200" textLength="12" fill="#eee">31°C</text><text x="916" y="489.200" textLength="33" fill="#eee">Muy soleado</text><text x="1022" y="489" textLength="8" fill="#eee">ESP</text><text x="1041" y="485.200" textLength="11" fill="#eee">13:18</text><text x="1035" y="492" textLength="24" fill="#eee">29/11/2022</text>
      <path d="M958.500 488.500L961 485.500L963.500 488.500M988 484H995M988 484V489H993M990 491H994M998 486V488H999L1001 490V484L999 486ZM1003 485Q1004.500 487 1003 489M1010 490Q1008 488 1012 487L1015 484Q1014 488 1011 490" fill="none" stroke="#eee" stroke-width=".9" />
      <path d="M968 488Q969 484 972 486L973 489H968Z" fill="#ccc" /><circle cx="973" cy="489" r="1.800" fill="#e22" /><rect x="979.500" y="483.500" width="3" height="6" fill="#eee" />
      <path d="M1065 484H1073V489H1069L1067 491V489H1065Z" fill="#fff" /><circle cx="1071" cy="490" r="2.800" fill="#444" stroke="#ccc" stroke-width=".7" />
    </g>
    <rect x="293" y="52" width="788" height="443" fill="none" stroke="#f00" stroke-width="2" />
    {#each [[292, 51], [687, 51], [1082, 51], [292, 273], [1082, 273], [292, 495], [687, 495], [1082, 495]] as [x, y]}<rect x={x - 4} y={y - 4} width="8" height="8" fill="#f00" />{/each}
  </svg>

  <div class="context">
    <div class="src">{@render monitor()}<span use:fit={38}>pantalla</span></div>
    <i class="vsep"></i>
    <div class="btn prop">{@render gear(17, '#d8d8d8')}<span use:fit={60}>Propiedades</span></div>
    <div class="btn filt">
      <svg width="17" height="17" viewBox="0 0 17 17"><circle cx="10.500" cy="10.500" r="5" fill="none" stroke="#ccc" stroke-width="1.300" stroke-dasharray="1.400 1.400" /><circle cx="6.500" cy="6.500" r="6" fill="#d0d0d0" /><path d="M2 5L10 12M4 3L12 10M7 2L12 7" stroke="#555" stroke-width="1" /></svg>
      <span use:fit={30}>Filtros</span>
    </div>
    <i class="vsep"></i>
    <span class="plabel" use:fit={39}>Pantalla</span>
    <div class="select wide"><span use:fit={232}>Pantalla 1: 1920x1080 @ 0,0 (Monitor principal)</span><b>
      <svg width="7" height="13" viewBox="0 0 7 13" fill="none" stroke="#bdbdbd" stroke-width="1.200"><path d="M.5 4L3.500 1L6.500 4M.5 9L3.500 12L6.500 9" /></svg></b></div>
  </div>

  <main>
    <section class="dock d1">
      {@render dockTitle('Escenas', 41)}
      <div class="list"><div class="item scene"><span use:fit={36}>Escena</span></div></div>
      <footer>{@render sign(true)}{@render sign(false)}<i></i>{@render chev(true)}{@render chev(false)}</footer>
    </section>
    <section class="dock d2">
      {@render dockTitle('Fuentes', 41)}
      <div class="list"><div class="item">{@render monitor()}<span class="grow"><span use:fit={38}>pantalla</span></span>
        <svg width="16" height="12" viewBox="0 0 16 12"><path d="M0 6Q8-4.500 16 6Q8 16.500 0 6Z" fill="#e0e0e0" /><circle cx="8" cy="6" r="3.600" fill="#303030" /><circle cx="8" cy="6" r="1.800" fill="#e0e0e0" /></svg>
        <svg class="lock" width="13" height="14" viewBox="0 0 13 14"><path d="M3.500 4.500V3.500Q3.500 1 6.500 1Q9.500 1 9.500 3.500V7" transform="translate(1)" fill="none" stroke="#777" stroke-width="1.700" /><rect x="0" y="6" width="13" height="8" rx="1" fill="#777" /></svg>
      </div></div>
      <footer>{@render sign(true)}{@render sign(false)}{@render gear(17, '#d8d8d8')}<i></i>{@render chev(true)}{@render chev(false)}</footer>
    </section>
    <section class="dock d3">
      {@render dockTitle('Mezclador de audio', 105)}
      <div class="mixer">
        <div class="channels">
          {#each channels as c}
            <div class="channel">
              <div class="names"><span use:fit={c.w}>{c.name}</span><span use:fit={c.dw}>{c.db}</span></div>
              <svg width="460" height="16" viewBox="0 0 460 16">
                {#if c.muted}<rect x="0" y="1" width="3" height="3" fill="#267f26" />{/if}
                <rect x="5" y="1" width="301" height="3" fill="#267f26" /><rect x="306" y="1" width="83" height="3" fill="#7f7f26" /><rect x="389" y="1" width="68" height="3" fill="#7f2626" />
                {#each ticks as t}
                  <rect x={Math.round(t.x - .5)} y="4" width="1" height={t.big ? 3 : 1.500} fill={t.big ? '#e8e8e8' : '#999'} />
                  {#if t.big}<text x={t.x - 1} y="13" text-anchor="middle">{t.v}</text>{/if}
                {/each}
              </svg>
              <div class="sliderrow">
                <div class="track"><div class="fill" style="width:{c.pos}px"></div><div class="thumb"></div></div>
                {#if c.muted}
                  <svg width="24" height="18" viewBox="0 0 24 18"><path d="M0 5H4L11 1V17L4 13H0Z" fill="#d40000" /><path d="M15.500 6L22.500 13M22.500 6L15.500 13" stroke="#d40000" stroke-width="1.800" /></svg>
                {:else}
                  <svg width="24" height="18" viewBox="0 0 24 18"><path d="M0 5H4L11 1V17L4 13H0Z" fill="#d8d8d8" /><path d="M14 5Q18 9 14 13M18 2Q24.500 9 18 16" fill="none" stroke="#d8d8d8" stroke-width="1.800" /></svg>
                {/if}
                {@render gear(18, '#d8d8d8')}
              </div>
            </div>
          {/each}
        </div>
        <div class="scroll"></div>
      </div>
    </section>
    <section class="dock d4">
      {@render dockTitle('Transiciones de escena', 120)}
      <div class="trow"><div class="select"><span use:fit={82}>Desvanecimiento</span><b>
        <svg width="7" height="13" viewBox="0 0 7 13" fill="none" stroke="#bdbdbd" stroke-width="1.200"><path d="M.5 4L3.500 1L6.500 4M.5 9L3.500 12L6.500 9" /></svg></b></div>
        <div class="gearbtn">{@render gear(17, '#d8d8d8')}</div></div>
      <div class="trow dur"><span use:fit={43}>Duración</span><div class="spin"><span use:fit={35}>300 ms</span><b>
        <svg width="14" height="21" viewBox="-1 0 14 21" fill="none" stroke="#d0d0d0" stroke-width="1.700"><path d="M1 7L6 2.500L11 7M1 14L6 18.500L11 14" /><path d="M-2 10.500H14" stroke="#2b2b2b" stroke-width="1" /></svg></b></div></div>
    </section>
    <section class="dock d5">
      {@render dockTitle('Controles', 51)}
      <div class="controls">{#each controls as [c, w]}<div class="cbtn"><span use:fit={w}>{c}</span></div>{/each}</div>
    </section>
  </main>

  <div class="status">
    <svg width="20" height="14" viewBox="0 0 20 14" fill="none" stroke="#999" stroke-width="1.200"><circle cx="10" cy="7" r="3.500" fill="#999" stroke="none" /><path d="M5.500 2.500Q2.500 7 5.500 11.500M14.500 2.500Q17.500 7 14.500 11.500M3 1Q-1 7 3 13M17 1Q21 7 17 13" /></svg>
    <span class="live" use:fit={73}>LIVE: 00:00:00</span><i></i><span class="rec" use:fit={72}>REC: 00:00:00</span><span class="cpu" use:fit={108}>CPU: 0.6%, 60.00 fps</span>
  </div>

  <div class="taskbar">
    <svg width="445" height="38" viewBox="0 731 445 38">
      <rect x="345" y="731" width="49" height="38" fill="#55565f" />
      {@render windows(16, 743, 1)}
      <circle cx="75" cy="748.500" r="5.300" fill="none" stroke="#e8e8e8" stroke-width="1.400" /><path d="M71 752.500L65 759" stroke="#e8e8e8" stroke-width="1.500" />
      <circle cx="121" cy="751.500" r="6.800" fill="none" stroke="#fff" stroke-width="2" />
      <g fill="none" stroke="#e4e4e4" stroke-width="1.200"><rect x="162.500" y="748" width="9.500" height="6.500" /><path d="M161.500 743.500V746H173V743.500M161.500 759V756.500H173V759M176.500 743.500V747M176.500 752V759" /><circle cx="176.500" cy="749.500" r="1" fill="#fff" /></g>
      {@render folder(210, 741.500, 1)}{@render chrome(270.500, 751.500, 12)}{@render laptop(309, 741, 1)}{@render rhino(357, 739, 1)}
      <g transform="translate(407 739.500)">{@render obs(24, '#b9b9bd', '#202126')}</g>
    </svg>
    <svg class="pen" width="18" height="18" viewBox="0 0 18 18" fill="none" stroke="#eee" stroke-width="1.400"><path d="M6 10Q1 9 1.500 13Q3 17 7 15L13 2Q15 0 15.500 2L10 14Q9 17 7 15M9 9Q15 6 16.500 8Q17 11 12 11" /></svg>
    <div class="clock"><span use:fit={28}>13:18</span><span use:fit={58}>29/11/2022</span></div>
  </div>
</div>

<style>
  :global(body) { background: #3a393a; overflow: hidden; }
  .app { width: 1361px; height: 769px; overflow: hidden; display: flex; flex-direction: column; background: #3a393a; color: #dcdcdc; font: 11px "Noto Sans", "Open Sans", sans-serif; white-space: nowrap; }
  svg { flex: none; display: block; }
  .titlebar { height: 19px; background: #fff; display: flex; align-items: flex-start; padding-left: 2px; color: #8f8f8f; font: 12px/17px "Open Sans", sans-serif; }
  .title { margin-left: 5px; }
  .winbtns { margin: 0 3px 0 auto; }
  nav { height: 22px; display: flex; gap: 16px; padding-left: 8px; font: 12px/23px "Open Sans", sans-serif; color: #e0e0e0; }
  .preview { background: #4c4c4c; }
  .cap text { font: 5.4px "Open Sans", sans-serif; }
  .cap text:not([fill]) { fill: #24242c; }
  .cap text.bold { font-weight: 700; }
  .cap text.big { font-size: 6.2px; }
  .context { height: 35px; display: flex; align-items: center; padding-bottom: 3px; box-sizing: border-box; }
  .context span { position: relative; top: -1px; }
  .src { width: 197px; padding-left: 6px; display: flex; gap: 11px; align-items: center; }
  .vsep { width: 2px; height: 23px; background: #242424; flex: none; }
  .btn { display: flex; align-items: center; }
  .prop { margin-left: 9px; width: 92px; }
  .filt { width: 60px; }
  .plabel { margin: 0 7px 0 4px; }
  .select { background: #4c4c4c; border-radius: 3px; display: flex; align-items: center; justify-content: space-between; padding-left: 9px; height: 20px; flex: 1; }
  .select b { width: 20px; height: 100%; border-left: 1px solid #333; display: flex; align-items: center; justify-content: center; }
  .select.wide { flex: none; width: 596px; height: 23px; padding-left: 8px; margin-left: 1px; }
  main { height: 167px; display: flex; }
  .dock { flex: none; display: flex; flex-direction: column; margin-right: 4px; }
  .d1 { width: 238px; } .d2 { width: 237px; } .d3 { width: 482px; } .d4 { width: 199px; } .d5 { width: 200px; margin: 0; }
  header { height: 21px; background: #464546; display: flex; align-items: center; justify-content: center; padding-right: 20px; font: 12px "Open Sans", sans-serif; position: relative; }
  .d5 header { padding-right: 16px; }
  .pop { position: absolute; right: 8px; top: 6px; }
  .list { height: 117px; background: #1f1e1f; border: 1px solid #181818; border-bottom: 0; box-sizing: border-box; }
  .item { height: 17px; background: #303030; display: flex; align-items: center; padding: 0 2px 0 3px; }
  .scene { color: #fff; }
  .grow { flex: 1; padding-left: 7px; }
  .lock { margin-left: 9px; }
  footer { height: 28px; box-sizing: border-box; border: 1px solid #1f1e1f; border-top: 0; display: flex; align-items: center; gap: 10px; padding-left: 6px; padding-bottom: 1px; }
  footer i { width: 1px; height: 19px; background: #333; margin: 0 -3px 0 -2px; }
  .mixer { height: 145px; background: #1f1e1f; display: flex; }
  .channels { width: 463px; padding: 3px 0 0 5px; box-sizing: border-box; }
  .channel { height: 59.500px; }
  .names { height: 13px; line-height: 15px; display: flex; justify-content: space-between; font-size: 10px; color: #e8e8e8; width: 457px; }
  .channel text { font: 6.500px "Open Sans", sans-serif; fill: #bbb; }
  .sliderrow { display: flex; align-items: center; height: 22px; margin-top: 1px; }
  .track { width: 399px; height: 4px; border-radius: 2px; background: #4c4c4c; display: flex; align-items: center; margin-right: 7px; }
  .fill { height: 4px; background: #2a82da; border-radius: 2px; }
  .thumb { width: 19px; height: 9px; border-radius: 2px; background: #d2d2d2; }
  .sliderrow > :global(svg:last-child) { margin-left: 7px; }
  .scroll { width: 10px; height: 139px; margin: 3px 0 0 5px; border-radius: 5px; background: #4c4c4c; }
  .trow { display: flex; align-items: center; padding: 5px 4px 0 4px; height: 20px; }
  .gearbtn { width: 22px; height: 21px; margin-left: 4px; background: #2b2b2b; border-radius: 3px; display: flex; align-items: center; justify-content: center; }
  .dur { padding-top: 4px; justify-content: space-between; }
  .spin { width: 135px; height: 21px; background: #1f1e1f; border-radius: 3px; display: flex; align-items: center; justify-content: space-between; padding-left: 9px; }
  .spin b { width: 16px; height: 21px; background: #4c4c4c; border-radius: 3px; display: flex; justify-content: center; }
  .controls { padding: 4px 4px 0 5px; display: flex; flex-direction: column; gap: 2.200px; }
  .cbtn { height: 21px; background: #4c4c4c; border-radius: 3px; display: flex; align-items: center; justify-content: center; }
  .status { height: 24px; display: flex; align-items: center; padding-left: 987px; padding-top: 1px; box-sizing: border-box; }
  .live { margin-left: 5px; }
  .status i { width: 10px; height: 10px; border-radius: 50%; background: #999; margin: 0 11px; }
  .rec { margin-right: 26px; }
  .taskbar { height: 38px; background: linear-gradient(90deg, #22242b, #242835 22%, #2b2d36 28%, #20242b 45%, #1e2127); display: flex; }
  .pen { margin: 12px 9px 0 auto; }
  .clock { width: 50px; display: flex; flex-direction: column; align-items: flex-start; font: 12px/18px "Open Sans", sans-serif; color: #fff; padding-top: 2px; }
  .clock span:first-child { margin-left: 16px; }
</style>
